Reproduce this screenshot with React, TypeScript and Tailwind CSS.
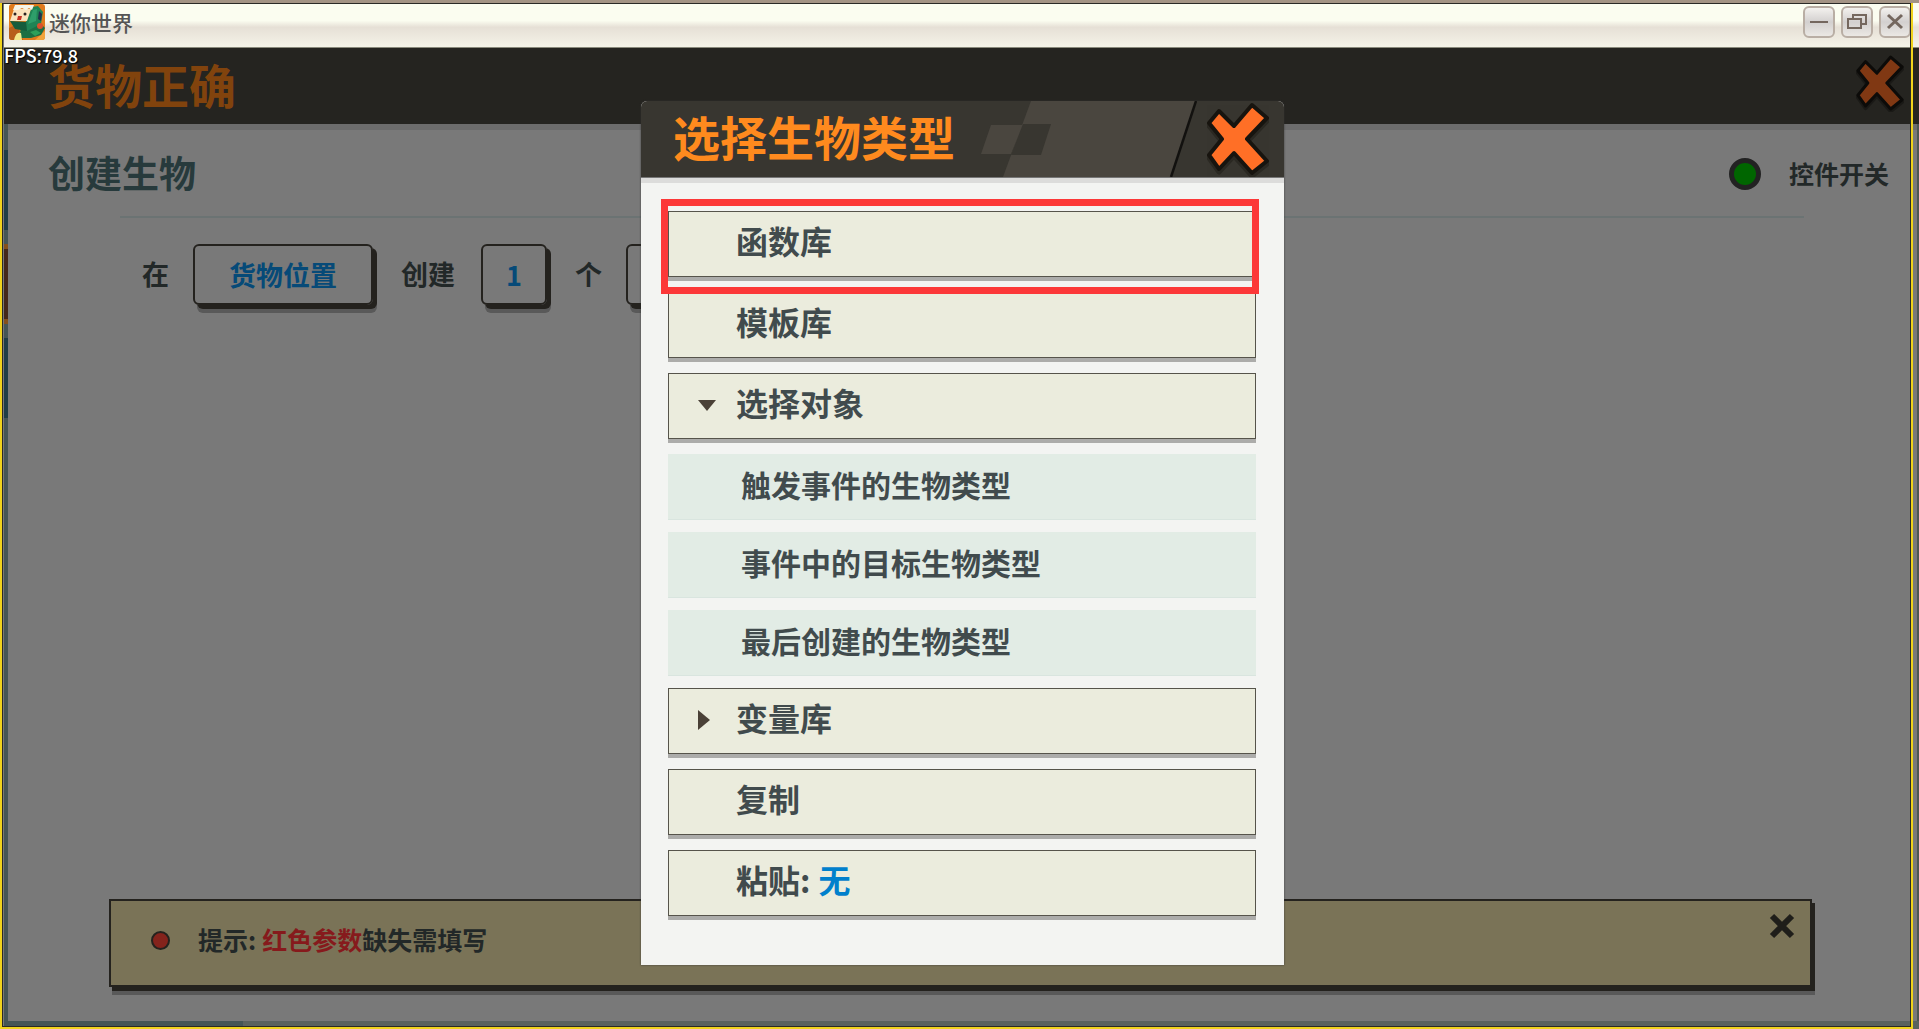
import { useState } from 'react';
import type { ReactNode } from 'react';

const OBJECTS = ['触发事件的生物类型', '事件中的目标生物类型', '最后创建的生物类型'];

function AppIcon() {
  return (
    <svg viewBox="0 0 36 36" className="size-9" aria-hidden="true">
      <defs>
        <clipPath id="icon-clip">
          <rect width="36" height="36" rx="3" />
        </clipPath>
      </defs>
      <g clipPath="url(#icon-clip)">
        <rect width="36" height="36" fill="#e07a1c" />
        <path d="M0 24 L8 20 L14 36 L0 36Z" fill="#b8601c" />
        <path d="M26 36 L36 27 L36 36Z" fill="#f2a43c" />
        <path d="M12 24 L30 18 L36 24 L32 31 L22 34 L10 34Z" fill="#1d6f43" />
        <path d="M1 17 L18 18 L18 27 L6 25Z" fill="#155c3d" />
        <path d="M23 3 L29 2 L34 8 L32 20 L18 27 L17 17Z" fill="#1f8455" />
        <path d="M24 6 L28 5 L27 17 L19 20Z" fill="#2e9e6a" />
        <path d="M5 5 L22 5 L18 17 L1 17Z" fill="#fbe3bd" />
        <path d="M6 1 L25 1 L23 6 L20 4 L17 6 L13 4 L9 6 L4 6Z" fill="#f6f4e8" />
        <path d="M30 7 L33 10 L32 17 L29 15Z" fill="#22304a" />
        <circle cx="6" cy="10" r="1.5" fill="#2c2320" />
        <circle cx="16" cy="10" r="1.5" fill="#2c2320" />
        <path d="M9 12 L13 12 L12 16 L8 16Z" fill="#c62f20" />
        <path d="M5 36 Q7 27 12 29 L13 36Z" fill="#f3e98c" />
        <path d="M21 28 L27 26 L32 29 L26 32Z" fill="#2ea05a" />
        <circle cx="31" cy="22" r="3" fill="#d9502c" />
      </g>
    </svg>
  );
}

function CrossIcon({ className, fill, stroke }: { className: string; fill: string; stroke: string }) {
  return (
    <svg viewBox="0 0 62 76" className={className} aria-hidden="true">
      <path
        d="M12 10 L27 25 L45 4 L60 17 L40 38 L60 60 L45 72 L27 52 L12 68 L2 54 L15 38 L2 22Z"
        fill={stroke}
        opacity="0.4"
        stroke={stroke}
        strokeWidth="5"
        strokeLinejoin="round"
        transform="translate(0 3)"
      />
      <path
        d="M12 10 L27 25 L45 4 L60 17 L40 38 L60 60 L45 72 L27 52 L12 68 L2 54 L15 38 L2 22Z"
        fill={fill}
        stroke={stroke}
        strokeWidth="4"
        strokeLinejoin="round"
      />
    </svg>
  );
}

function WindowButton({ label, children }: { label: string; children: ReactNode }) {
  return (
    <button
      type="button"
      aria-label={label}
      className="flex size-8 items-center justify-center rounded-md border-2 border-[#b9aea4] bg-linear-to-b from-[#f3f1ee] via-[#d3d0cf] to-[#ebe8e4]"
    >
      <svg viewBox="0 0 24 24" className="size-6" fill="none" stroke="#74675e" aria-hidden="true">
        {children}
      </svg>
    </button>
  );
}

function TitleBar() {
  return (
    <header className="flex h-[45px] shrink-0 items-center justify-between border-b border-[#8a8a7c] bg-linear-to-b from-[#fbfdf0] from-40% via-[#e6e0d6] via-55% to-[#f5f3e8] pr-2 pb-1.5 pl-[5px]">
      <div className="flex items-center gap-1">
        <AppIcon />
        <span className="text-[21px] leading-7 font-medium text-[#555555]">迷你世界</span>
      </div>
      <div className="flex gap-1.5">
        <WindowButton label="最小化">
          <path d="M3 12H21" strokeWidth="2" />
        </WindowButton>
        <WindowButton label="还原">
          <path d="M8 8V5H21V14H17" strokeWidth="2" />
          <rect x="3" y="9" width="13" height="9" strokeWidth="2" />
        </WindowButton>
        <WindowButton label="关闭">
          <path d="M5 5L19 18M19 5L5 18" strokeWidth="3" />
        </WindowButton>
      </div>
    </header>
  );
}

// Slice of the tab list that stays visible left of the panel.
function TabStrip() {
  return (
    <div className="flex w-1 shrink-0 flex-col gap-[14px] bg-[#455555] pt-[26px]">
      <div className="h-20 bg-[#1f3d46]" />
      <div className="h-20 border-y-5 border-[#84501c] bg-[#43281a]" />
      <div className="h-20 bg-[#1f3d46]" />
    </div>
  );
}

function ParamButton({ className, label, children }: { className: string; label?: string; children?: ReactNode }) {
  return (
    <button
      type="button"
      aria-label={label}
      className={`mr-1 h-[61px] shrink-0 rounded-md border-2 border-[#24221e] pt-0.5 text-[27px] font-bold text-[#064a78] shadow-[4px_4px_0_#24221e,4px_8px_0_#595959] ${className}`}
    >
      {children}
    </button>
  );
}

function OptionButton({
  icon,
  expanded,
  onClick,
  children,
}: {
  icon?: ReactNode;
  expanded?: boolean;
  onClick?: () => void;
  children: ReactNode;
}) {
  return (
    <button
      type="button"
      aria-expanded={expanded}
      onClick={onClick}
      className="flex h-[66px] w-full items-center border border-[#56544b] bg-[#ebecdd] pb-2 text-left text-[32px] font-bold text-[#414b4d] shadow-[0_4px_0_#acacaa]"
    >
      <span className="w-[67px] pt-1.5 pl-[29px]">{icon}</span>
      {children}
    </button>
  );
}

function TypeDialog() {
  const [objectsOpen, setObjectsOpen] = useState(true);
  const [variablesOpen, setVariablesOpen] = useState(false);

  return (
    <section
      role="dialog"
      aria-labelledby="dialog-title"
      className="w-[643px] rounded-t-md bg-[#f3f4f2] pb-[49px] shadow-[0_0_2px_#333333]"
    >
      <div className="relative flex h-19 items-center justify-between overflow-hidden rounded-t-md bg-[#383630] pr-[15px] pl-8">
        <svg viewBox="0 0 220 76" className="absolute right-[87px] h-19 w-[220px]" aria-hidden="true">
          <path d="M54 0H220L194 76H26Z" fill="#4a463f" />
          <path d="M14 24H46L34 53H4Z" fill="#4a463f" />
          <path d="M46 23H74L64 54H34Z" fill="#383630" />
          <path d="M219 0L194 76" stroke="#12110f" strokeWidth="2.5" />
        </svg>
        <h2 id="dialog-title" className="relative pb-2 text-[47px] leading-none font-bold text-[#ff8a1e]">
          选择生物类型
        </h2>
        <button type="button" aria-label="关闭" className="relative">
          <CrossIcon className="h-19 w-[62px]" fill="#ff6f26" stroke="#17140f" />
        </button>
      </div>
      <div className="h-1.5 border-t border-[#777777] bg-[#dcdcdb]" />
      <div className="flex flex-col gap-[15px] pt-7 pr-7 pl-[27px]">
        <div className="relative">
          <OptionButton>函数库</OptionButton>
          <div className="pointer-events-none absolute -top-3 -right-[3px] -bottom-[17px] -left-[7px] z-10 border-7 border-[#fc3838]" />
        </div>
        <OptionButton>模板库</OptionButton>
        <OptionButton
          expanded={objectsOpen}
          onClick={() => setObjectsOpen(!objectsOpen)}
          icon={
            <svg viewBox="0 0 18 11" className="h-[11px] w-[18px]" aria-hidden="true">
              <path d="M0 0H18L9 11Z" fill="#4a4137" />
            </svg>
          }
        >
          选择对象
        </OptionButton>
        {objectsOpen && (
          <ul className="-mb-[3px] flex flex-col gap-3">
            {OBJECTS.map((label) => (
              <li key={label}>
                <button
                  type="button"
                  className="flex h-[66px] w-full items-center border-b border-[#d9e5df] bg-[#e2ece5] pb-1 pl-[73px] text-left text-[30px] font-bold text-[#414b4d]"
                >
                  {label}
                </button>
              </li>
            ))}
          </ul>
        )}
        <OptionButton
          expanded={variablesOpen}
          onClick={() => setVariablesOpen(!variablesOpen)}
          icon={
            <svg viewBox="0 0 12 20" className="h-5 w-3" aria-hidden="true">
              <path d="M0 0L12 10L0 20Z" fill="#4a4137" />
            </svg>
          }
        >
          变量库
        </OptionButton>
        <OptionButton>复制</OptionButton>
        <OptionButton>
          粘贴:<span className="ml-2 text-[#0080cc]">无</span>
        </OptionButton>
      </div>
    </section>
  );
}

function TipBar() {
  return (
    <div className="mt-auto mr-[105px] mb-[34px] ml-[101px] flex h-22 items-center border-2 border-[#24221e] bg-[#7a7357] pr-[15px] pb-1.5 pl-10 shadow-[3px_4px_0_#24221e,3px_8px_0_#595959]">
      <span className="size-[19px] rounded-full border-2 border-[#24221e] bg-[#84231c]" />
      <p className="pl-7 text-[25px] font-bold text-[#222828]">
        提示:<span className="ml-1.5 text-[#861a1c]">红色参数</span>缺失需填写
      </p>
      <button type="button" aria-label="关闭提示" className="mt-3 ml-auto self-start">
        <svg viewBox="0 0 26 26" className="size-[26px]" stroke="#1f1e1a" strokeWidth="6" aria-hidden="true">
          <path d="M3 3L23 23M23 3L3 23" />
        </svg>
      </button>
    </div>
  );
}

export default function App() {
  return (
    <div className="relative flex min-h-screen flex-col overflow-hidden border-t-3 border-[#a39384] bg-[#797979] pl-1 font-['Noto_Sans_CJK_SC',sans-serif]">
      <TitleBar />

      <div className="flex h-19 shrink-0 items-center justify-between bg-[#252420] pr-[15px] pb-1.5 pl-11">
        <h1 className="text-[47px] leading-none font-bold text-[#81430d]">货物正确</h1>
        <button type="button" aria-label="关闭">
          <CrossIcon className="h-[58px] w-12" fill="#803813" stroke="#0c0b09" />
        </button>
      </div>

      <div className="flex grow">
        <TabStrip />
        <main className="flex grow flex-col border-r-2 border-[#4c5651] pt-6 shadow-[inset_0_6px_0_#6c6c6c]">
          <div className="flex h-13 items-center justify-between pr-7 pl-10">
            <h2 className="pb-1 text-[37px] leading-none font-bold text-[#273a3c]">创建生物</h2>
            <label className="flex items-center gap-7 text-[25px] font-bold text-[#222828]">
              <input
                type="checkbox"
                defaultChecked
                className="size-8 appearance-none rounded-full border-5 border-[#222222] bg-[#006600]"
              />
              控件开关
            </label>
          </div>
          <hr className="mt-4 mr-[113px] ml-28 border-t-2 border-[#6b7373]" />
          <div className="mt-[26px] flex items-center gap-6 pl-[134px] text-[27px] font-bold text-[#222828]">
            <span>在</span>
            <ParamButton className="w-45">货物位置</ParamButton>
            <span className="mr-0.5">创建</span>
            <ParamButton className="w-[66px]">1</ParamButton>
            <span>个</span>
            <ParamButton className="w-45" label="生物类型" />
          </div>
          <TipBar />
        </main>
      </div>
      <div className="flex h-2 shrink-0 bg-[#5a625e]">
        <div className="w-1/8 bg-[#455555]" />
      </div>

      <span className="absolute top-[42px] left-1 text-lg leading-5 font-medium text-white [text-shadow:1px_1px_1px_#000]">
        FPS:79.8
      </span>

      <div className="absolute inset-x-0 top-[98px] flex justify-center pl-1.5">
        <TypeDialog />
      </div>

      <div className="pointer-events-none absolute -top-0.5 right-1.5 bottom-0 left-0 border-2 border-[#f0d31c]">
        <div className="h-full border border-[#2a2a26]" />
      </div>
    </div>
  );
}
